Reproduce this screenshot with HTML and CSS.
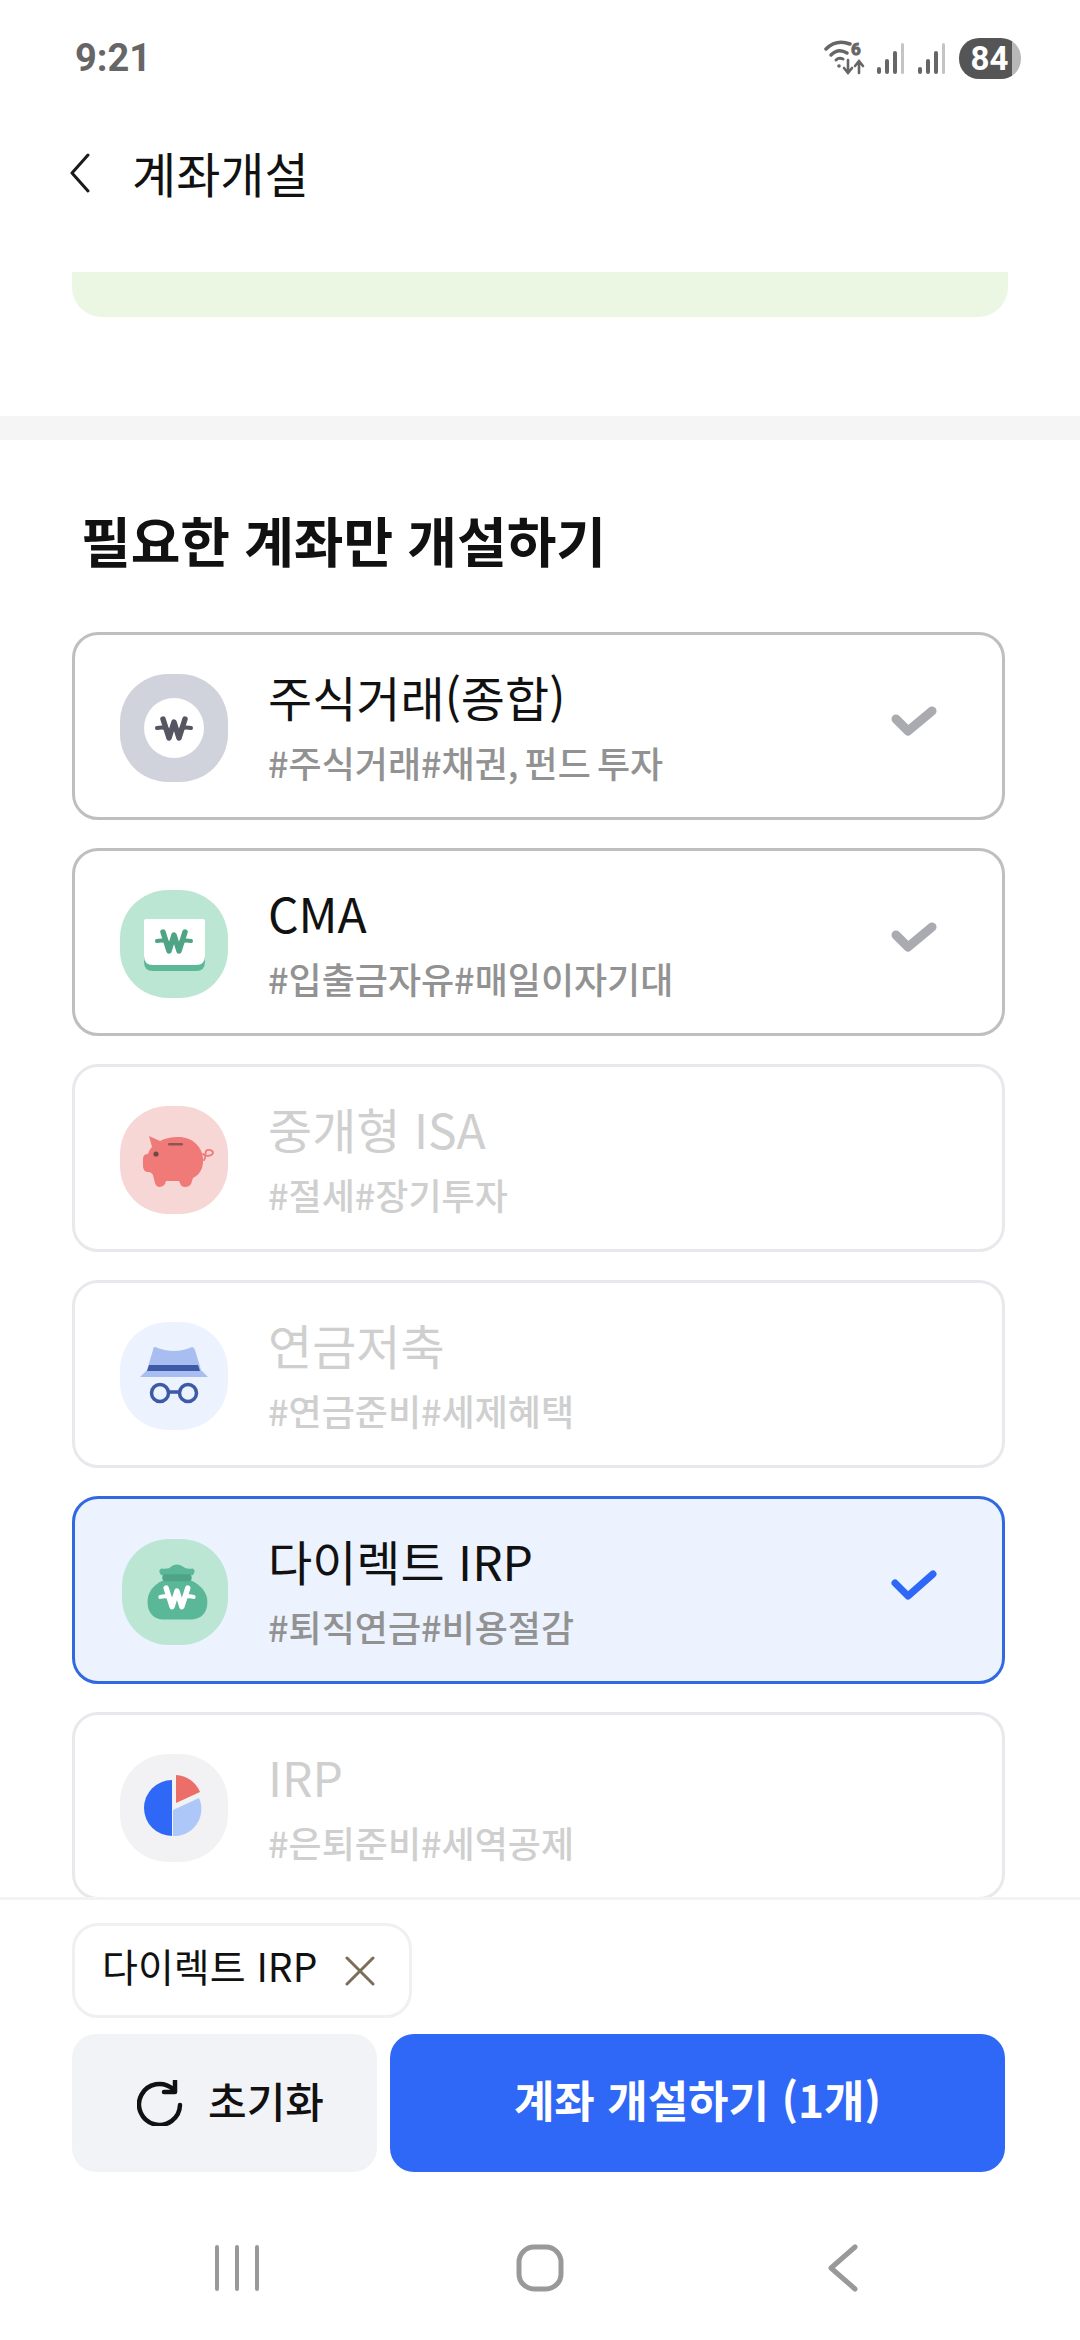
FILE: index.html
```html
<!DOCTYPE html>
<html lang="ko">

<head>
    <meta charset="UTF-8">
    <meta name="viewport" content="width=device-width, initial-scale=1.0">
    <title>계좌개설</title>
    <link rel="stylesheet" href="styles.css">
</head>

<body>
    <svg class="defs" width="0" height="0">
        <defs>
            <rect id="squircle" width="108" height="108" rx="48"/>
            <g id="won" fill="none" stroke-linecap="round" stroke-linejoin="round">
                <path d="M-11-10L-5 9L0-7L5 9L11-10" stroke-width="5.5"/>
                <path d="M-17-1C-13-2-10-2-7 0M7 0C10-2 13-2 17-1" stroke-width="4"/>
            </g>
        </defs>
    </svg>

    <div class="statusbar">
        <span class="time">9:21</span>
        <div class="status-icons">
            <svg width="42" height="40" viewBox="0 0 42 40" fill="none" stroke="#666" stroke-linecap="round">
                <path d="M2 10C9 3 18 2 26 5" stroke-width="3.5"/>
                <path d="M7 16C12 11 18 11 23 14" stroke-width="3.5"/>
                <path d="M12 21C14 19 17 19 19 20" stroke-width="3"/>
                <circle cx="15" cy="27" r="1.8" fill="#666" stroke="none"/>
                <text x="27" y="16" class="wifi-six">6</text>
                <path d="M24 21V33M20 29L24 34L28 29M35 34V23M31 27L35 22L39 27" stroke-width="2.6"/>
            </svg>
            <svg width="30" height="32" viewBox="0 0 30 32">
                <rect x="0" y="24" width="4" height="7" rx="2" fill="#666"/>
                <rect x="8" y="16" width="4" height="15" rx="2" fill="#666"/>
                <rect x="16" y="8" width="4" height="23" rx="2" fill="#666"/>
                <rect x="24" y="0" width="3" height="31" rx="1.5" fill="#c4c4c4"/>
            </svg>
            <svg width="30" height="32" viewBox="0 0 30 32">
                <rect x="0" y="24" width="4" height="7" rx="2" fill="#666"/>
                <rect x="8" y="16" width="4" height="15" rx="2" fill="#666"/>
                <rect x="16" y="8" width="4" height="23" rx="2" fill="#666"/>
                <rect x="24" y="0" width="3" height="31" rx="1.5" fill="#c4c4c4"/>
            </svg>
            <div class="battery"><span>84</span></div>
        </div>
    </div>

    <header class="topbar">
        <svg width="22" height="40" viewBox="0 0 22 40" fill="none" stroke="#1a1a1a" stroke-width="3" stroke-linecap="round" stroke-linejoin="round">
            <path d="M19 2L3 20L19 38"/>
        </svg>
        <h1>계좌개설</h1>
    </header>

    <main class="scroll">
        <div class="banner"></div>
        <div class="band"></div>

        <section class="accounts">
            <h2>필요한 계좌만 개설하기</h2>

            <div class="card on">
                <svg class="icon" viewBox="0 0 108 108">
                    <use href="#squircle" fill="#d0d3dc"/>
                    <circle cx="54" cy="54" r="30" fill="#fff"/>
                    <use href="#won" x="54" y="55" stroke="#555661"/>
                </svg>
                <div class="info">
                    <div class="name">주식거래(종합)</div>
                    <div class="tags">#주식거래#채권, 펀드 투자</div>
                </div>
                <svg class="check" viewBox="0 0 46 30" fill="none" stroke="#a9abb0" stroke-width="9" stroke-linecap="round" stroke-linejoin="round">
                    <path d="M5 13L17 25L41 5"/>
                </svg>
            </div>

            <div class="card on">
                <svg class="icon" viewBox="0 0 108 108">
                    <use href="#squircle" fill="#bbe6d4"/>
                    <path d="M24 62H85V72Q85 81 76 81H33Q24 81 24 72Z" fill="#5cb896"/>
                    <path d="M26 29H83Q85 29 85 31V66Q85 75 76 75H33Q24 75 24 66V31Q24 29 26 29Z" fill="#fff"/>
                    <use href="#won" x="54" y="52" stroke="#4ea484"/>
                </svg>
                <div class="info">
                    <div class="name">CMA</div>
                    <div class="tags">#입출금자유#매일이자기대</div>
                </div>
                <svg class="check" viewBox="0 0 46 30" fill="none" stroke="#a9abb0" stroke-width="9" stroke-linecap="round" stroke-linejoin="round">
                    <path d="M5 13L17 25L41 5"/>
                </svg>
            </div>

            <div class="card off">
                <svg class="icon" viewBox="0 0 108 108">
                    <use href="#squircle" fill="#f7d7d6"/>
                    <path d="M29 30L40 35C50 30 66 29 74 36C82 42 85 52 82 62C80 67 77 70 73 72L71 78Q69 81 65 81Q61 81 60 77L59 75H46L45 78Q43 81 40 81Q36 81 35 77L33 69C31 66 30 66 27 66Q23 65 23 60V53Q23 48 28 48C29 45 30 43 32 41Z" fill="#f07a77"/>
                    <rect x="48" y="37" width="15" height="2.5" rx="1.2" fill="#8a5656"/>
                    <circle cx="36" cy="48" r="2.6" fill="#6b4a4a"/>
                    <path d="M83 48C86 51 92 50 93 47C93 44 88 43 86 45C85 48 86 52 84 54" fill="none" stroke="#f07a77" stroke-width="1.8" stroke-linecap="round"/>
                </svg>
                <div class="info">
                    <div class="name">중개형 ISA</div>
                    <div class="tags">#절세#장기투자</div>
                </div>
            </div>

            <div class="card off">
                <svg class="icon" viewBox="0 0 108 108">
                    <use href="#squircle" fill="#ecf3fe"/>
                    <path d="M35 25Q45 29 54 29Q63 29 72 25Q74 25 75 28L81 48L88 55H20L27 48L33 28Q33 25 35 25Z" fill="#a9bef0"/>
                    <path d="M29 43H78L80 49H27Z" fill="#3d5aa7"/>
                    <g fill="none" stroke="#3d5aa7" stroke-width="3.5">
                        <circle cx="40" cy="71" r="8.5"/>
                        <circle cx="68" cy="71" r="8.5"/>
                        <path d="M48 70H60"/>
                    </g>
                </svg>
                <div class="info">
                    <div class="name">연금저축</div>
                    <div class="tags">#연금준비#세제혜택</div>
                </div>
            </div>

            <div class="card picked">
                <svg class="icon icon-small" viewBox="0 0 108 108">
                    <use href="#squircle" fill="#bbe6d4"/>
                    <path d="M40 30Q48 31 50 28Q56 24 62 28Q65 31 72 30Q76 32 72 37H40Q36 32 40 30Z" fill="#5ab797"/>
                    <path d="M42 42C31 47 26 55 26 64C26 76 33 82 42 82H70C80 82 87 76 87 64C87 55 81 47 70 42Z" fill="#5ab797"/>
                    <rect x="41" y="36" width="30" height="7" rx="3.5" fill="#4fa487"/>
                    <use href="#won" x="56" y="60" stroke="#fff"/>
                </svg>
                <div class="info">
                    <div class="name">다이렉트 IRP</div>
                    <div class="tags">#퇴직연금#비용절감</div>
                </div>
                <svg class="check" viewBox="0 0 46 30" fill="none" stroke="#2f67f6" stroke-width="7" stroke-linecap="round" stroke-linejoin="round">
                    <path d="M4 13L17 26L42 4"/>
                </svg>
            </div>

            <div class="card off">
                <svg class="icon" viewBox="0 0 108 108">
                    <use href="#squircle" fill="#f2f2f5"/>
                    <path d="M52 26A28 28 0 0 0 52 82Z" fill="#2f67f6"/>
                    <path d="M53 56L79 44A27 27 0 0 1 53 82Z" fill="#adc8f8"/>
                    <path d="M56 21A27 27 0 0 1 80 38L56 49Z" fill="#ec6e68"/>
                </svg>
                <div class="info">
                    <div class="name">IRP</div>
                    <div class="tags">#은퇴준비#세역공제</div>
                </div>
            </div>
        </section>
    </main>

    <footer class="bottom">
        <div class="chip">
            <span>다이렉트 IRP</span>
            <svg width="30" height="30" viewBox="0 0 30 30" fill="none" stroke="#7a6e58" stroke-width="3" stroke-linecap="round">
                <path d="M2 2L28 28M28 2L2 28"/>
            </svg>
        </div>
        <div class="actions">
            <button class="reset" type="button">
                <svg width="46" height="46" viewBox="0 0 46 46" fill="none" stroke="#111" stroke-width="4.5" stroke-linecap="round">
                    <path d="M36 9A20.5 20.5 0 1 0 43 25"/>
                    <path d="M38 1V12H27" stroke-linejoin="round"/>
                </svg>
                <span class="reset-label">초기화</span>
            </button>
            <button class="submit" type="button">계좌 개설하기 (1개)</button>
        </div>
        <nav class="navbar">
            <svg width="44" height="46" viewBox="0 0 44 46" fill="none" stroke="#999" stroke-width="4" stroke-linecap="round">
                <path d="M2 2V44M22 2V44M42 2V44"/>
            </svg>
            <svg width="48" height="48" viewBox="0 0 48 48" fill="none" stroke="#999" stroke-width="5">
                <rect x="3" y="3" width="42" height="42" rx="15"/>
            </svg>
            <svg width="30" height="48" viewBox="0 0 30 48" fill="none" stroke="#999" stroke-width="5" stroke-linecap="round" stroke-linejoin="round">
                <path d="M27 3L3 24L27 45"/>
            </svg>
        </nav>
    </footer>
</body>

</html>
```

FILE: styles.css
```css
/* General Styles */
body {
    font-family: "Noto Sans CJK KR", "Noto Sans", sans-serif;
    background-color: #fff;
    color: #111;
    margin: 0;
    height: 2340px;
    display: flex;
    flex-direction: column;
    overflow: hidden;
}

.defs {
    position: absolute;
}

/* Status bar */
.statusbar {
    height: 116px;
    box-sizing: border-box;
    padding: 36px 59px 0 75px;
    display: flex;
    justify-content: space-between;
    align-items: flex-start;
}

.time {
    font-family: Roboto, sans-serif;
    font-weight: 700;
    font-size: 38px;
    line-height: 44px;
    color: #666;
}

.status-icons {
    display: flex;
    align-items: center;
    gap: 11px;
    margin-top: 2px;
}

.wifi-six {
    font-family: Roboto, sans-serif;
    font-size: 17px;
    font-weight: 700;
    fill: #666;
}

.battery {
    width: 62px;
    height: 41px;
    border-radius: 20px;
    background: linear-gradient(to right, #555 85%, #b8b8b8 85%);
    color: #fff;
    display: flex;
    align-items: center;
    justify-content: center;
    font-family: Roboto, sans-serif;
    font-weight: 700;
    font-size: 33px;
}

.battery span {
    margin-right: 1px;
}

/* Header */
.topbar {
    height: 156px;
    box-sizing: border-box;
    padding: 0 0 42px 69px;
    display: flex;
    align-items: center;
    gap: 41px;
}

.topbar h1 {
    margin: -2px 0 0;
    font-size: 48px;
    font-weight: 400;
    color: #111;
}

/* Scrolling part */
.scroll {
    height: 1625px;
    overflow: hidden;
    flex: none;
}

.banner {
    height: 45px;
    margin: 0 72px;
    background-color: #ebf6e3;
    border-radius: 0 0 30px 30px;
}

.band {
    height: 24px;
    margin-top: 99px;
    background-color: #f5f5f5;
}

.accounts {
    padding: 0 75px 0 72px;
}

.accounts h2 {
    margin: 63px 0 0 9px;
    height: 129px;
    font-size: 54px;
    font-weight: 700;
    line-height: 74px;
    word-spacing: -1px;
    color: #111;
}

/* Cards */
.card {
    height: 188px;
    box-sizing: border-box;
    margin-top: 28px;
    border: 3px solid #bfbfbf;
    border-radius: 26px;
    background-color: #fff;
    display: flex;
    align-items: center;
    padding-left: 45px;
}

.accounts h2 + .card {
    margin-top: 0;
}

.card.off {
    border-color: #e9e9ed;
}

.card.picked {
    border-color: #3169e0;
    background-color: #ecf3fe;
}

.icon {
    width: 108px;
    height: 108px;
    flex: none;
    margin-top: 4px;
}

.icon-small {
    width: 106px;
    height: 106px;
    margin-left: 2px;
}

.info {
    flex: 1;
    margin: -2px 0 0 40px;
}

.name {
    font-size: 48px;
    line-height: 62px;
    color: #111;
}

.tags {
    font-size: 36px;
    font-weight: 500;
    line-height: 46px;
    word-spacing: -4px;
    margin-top: 12px;
    color: #929292;
}

.card.off .name,
.card.off .tags {
    color: #cfcfcf;
}

.check {
    width: 46px;
    height: 30px;
    flex: none;
    margin: 0 65px 10px 0;
}

/* Footer */
.bottom {
    flex: 1;
    border-top: 3px solid #f3f3f3;
    padding: 23px 75px 0 72px;
    background-color: #fff;
}

.chip {
    display: inline-flex;
    align-items: center;
    gap: 28px;
    height: 95px;
    box-sizing: border-box;
    padding: 0 34px 0 27px;
    border: 3px solid #f0f0f0;
    border-radius: 26px;
    vertical-align: top;
}

.chip span {
    font-size: 39px;
    margin-top: -12px;
    color: #111;
}

.actions {
    display: flex;
    gap: 13px;
    margin-top: 16px;
}

.actions button {
    height: 138px;
    border: none;
    border-radius: 24px;
    font-family: inherit;
    display: flex;
    align-items: center;
    justify-content: center;
}

.reset {
    width: 305px;
    flex: none;
    gap: 25px;
    padding: 0 0 0 12px;
    background-color: #f1f3f7;
    color: #111;
    font-size: 42px;
    font-weight: 500;
}

.reset-label {
    margin-top: -8px;
}

.submit {
    flex: 1;
    padding: 0 0 8px;
    background-color: #2f67f6;
    color: #fff;
    font-size: 44px;
    font-weight: 700;
}

/* Navigation bar */
.navbar {
    margin: 72px 0 0 -72px;
    width: 1080px;
    display: grid;
    grid-template-columns: repeat(3, 303px);
    justify-content: center;
    justify-items: center;
    align-items: center;
}
```
